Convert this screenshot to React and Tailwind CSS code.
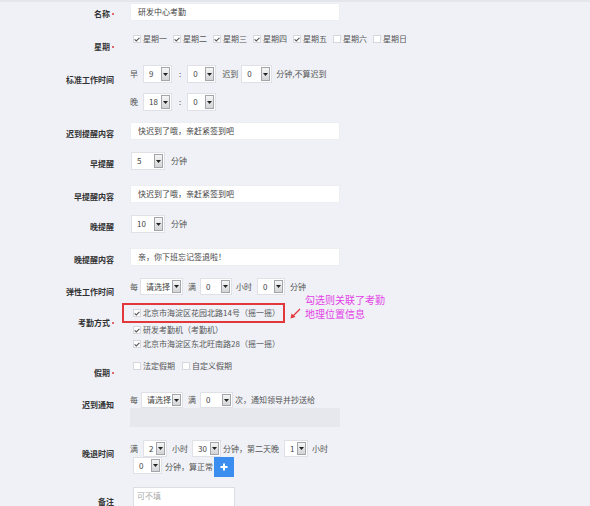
import React from 'react';
import clsx from 'clsx';

const Sel = ({ value, className }) => (
  <div className={clsx('flex items-stretch justify-between bg-white border border-[#dfe1e6] p-px shrink-0', className)}>
    <span className="pl-[4px] self-center text-[#444]">{value}</span>
    <span className="w-[9px] flex items-center justify-center border border-[#a3a5aa] bg-gradient-to-b from-[#f6f6f6] to-[#d3d4d6]">
      <svg width="5" height="3" viewBox="0 0 5 3">
        <path d="M0 0h5L2.5 3z" fill="#222" />
      </svg>
    </span>
  </div>
);

const Check = ({ checked, children }) => (
  <label className="flex items-center gap-[2px]">
    <span className="w-[8px] h-[8px] bg-white border border-[#d6d8dd] flex items-center justify-center shrink-0">
      {checked && (
        <svg width="6" height="5" viewBox="0 0 6 5">
          <path d="M0.6 2.4L2.3 4L5.4 0.9" stroke="#555" strokeWidth="1.1" fill="none" />
        </svg>
      )}
    </span>
    <span>{children}</span>
  </label>
);

const Row = ({ label, required, h, lp, className, children }) => (
  <div className={clsx('flex', h, className)}>
    <div className={clsx('w-[114px] shrink-0 text-right leading-[10px] font-bold text-[#333]', lp)}>
      {label}
      {required && <span className="inline-block w-[2px] h-[2px] rounded-full bg-[#e0393c] ml-[2px] mb-[2px] align-middle" />}
    </div>
    <div className="ml-[16px] flex-1">{children}</div>
  </div>
);

const TextBox = ({ value }) => (
  <div className="w-[210px] h-[18px] bg-white border border-[#eceef2] flex items-center pl-[7px] text-[#444]">{value}</div>
);

export default function App() {
  return (
    <div
      className="w-full h-[506px] overflow-hidden bg-[#eff1f7] border-t-2 border-[#e4e6eb] pt-px text-[8px] text-[#555]"
      style={{ fontFamily: '"Noto Sans CJK SC", "Noto Sans", sans-serif' }}
    >
      <Row label="名称" required h="h-[29px]" lp="pt-[6px]">
        <TextBox value="研发中心考勤" />
      </Row>

      <Row label="星期" required h="h-[33px]" lp="pt-[10px]">
        <div className="h-[14px] flex items-center gap-[6px] pl-[3px]">
          <Check checked>星期一</Check>
          <Check checked>星期二</Check>
          <Check checked>星期三</Check>
          <Check checked>星期四</Check>
          <Check checked>星期五</Check>
          <Check>星期六</Check>
          <Check>星期日</Check>
        </div>
      </Row>

      <Row label="标准工作时间" h="h-[57px]" lp="pt-[10px]">
        <div className="h-[18px] flex items-center">
          <span>早</span>
          <Sel value="9" className="ml-[5px] w-[29px] h-[18px]" />
          <span className="ml-[7px]">:</span>
          <Sel value="0" className="ml-[6px] w-[29px] h-[18px]" />
          <span className="ml-[6px]">迟到</span>
          <Sel value="0" className="ml-[3px] w-[31px] h-[18px]" />
          <span className="ml-[4px]">分钟,不算迟到</span>
        </div>
        <div className="h-[18px] mt-[10px] flex items-center">
          <span>晚</span>
          <Sel value="18" className="ml-[5px] w-[29px] h-[18px]" />
          <span className="ml-[7px]">:</span>
          <Sel value="0" className="ml-[6px] w-[29px] h-[18px]" />
        </div>
      </Row>

      <Row label="迟到提醒内容" h="h-[30px]" lp="pt-[7px]">
        <TextBox value="快迟到了哦，亲赶紧签到吧" />
      </Row>

      <Row label="早提醒" h="h-[33px]" lp="pt-[7px]">
        <div className="h-[18px] flex items-center">
          <Sel value="5" className="ml-[1px] w-[34px] h-[18px]" />
          <span className="ml-[6px]">分钟</span>
        </div>
      </Row>

      <Row label="早提醒内容" h="h-[30px]" lp="pt-[7px]">
        <TextBox value="快迟到了哦，亲赶紧签到吧" />
      </Row>

      <Row label="晚提醒" h="h-[33px]" lp="pt-[7px]">
        <div className="h-[18px] flex items-center">
          <Sel value="10" className="ml-[1px] w-[34px] h-[18px]" />
          <span className="ml-[6px]">分钟</span>
        </div>
      </Row>

      <Row label="晚提醒内容" h="h-[30px]" lp="pt-[7px]">
        <TextBox value="亲，你下班忘记签退啦！" />
      </Row>

      <Row label="弹性工作时间" h="h-[25px]" lp="pt-[9px]">
        <div className="h-[17px] flex items-center">
          <span>每</span>
          <Sel value="请选择" className="ml-[2px] w-[43px] h-[17px]" />
          <span className="ml-[5px]">满</span>
          <Sel value="0" className="ml-[4px] w-[32px] h-[17px]" />
          <span className="ml-[4px]">小时</span>
          <Sel value="0" className="ml-[5px] w-[28px] h-[17px]" />
          <span className="ml-[5px]">分钟</span>
        </div>
      </Row>

      <Row label="考勤方式" required h="h-[56px]" lp="pt-[15px]" className="relative">
        <div className="-ml-[8px] w-[163px] h-[20px] border-2 border-[#e3383b] flex items-center pl-[9px]">
          <Check checked>北京市海淀区花园北路14号（摇一摇）</Check>
        </div>
        <div className="h-[14px] flex items-center pl-[3px]">
          <Check checked>研发考勤机（考勤机）</Check>
        </div>
        <div className="h-[14px] flex items-center pl-[3px]">
          <Check checked>北京市海淀区东北旺南路28（摇一摇）</Check>
        </div>
        <svg className="absolute left-[289px] top-[5px]" width="12" height="11" viewBox="0 0 12 11">
          <path d="M11 1L3 9" stroke="#e3383b" strokeWidth="1.3" />
          <path d="M1.5 10.5L2.5 5.5L6.5 9z" fill="#e3383b" />
        </svg>
        <div className="absolute left-[305px] -top-[10px] text-[10px] leading-[14px] text-[#e33fe6]">
          <div>勾选则关联了考勤</div>
          <div>地理位置信息</div>
        </div>
      </Row>

      <Row label="假期" required h="h-[33px]" lp="pt-[9px]">
        <div className="h-[14px] flex items-center gap-[7px] pl-[3px]">
          <Check>法定假期</Check>
          <Check>自定义假期</Check>
        </div>
      </Row>

      <Row label="迟到通知" h="h-[48px]" lp="pt-[8px]">
        <div className="h-[16px] flex items-center">
          <span>每</span>
          <Sel value="请选择" className="ml-[3px] w-[42px] h-[16px]" />
          <span className="ml-[5px]">满</span>
          <Sel value="0" className="ml-[4px] w-[33px] h-[16px]" />
          <span className="ml-[2px]">次，通知领导并抄送给</span>
        </div>
        <div className="w-[210px] h-[19px] bg-[#e7e8ed]" />
      </Row>

      <Row label="晚退时间" h="h-[47px]" lp="pt-[9px]">
        <div className="h-[17px] flex items-center">
          <span>满</span>
          <Sel value="2" className="ml-[5px] w-[24px] h-[17px]" />
          <span className="ml-[5px]">小时</span>
          <Sel value="30" className="ml-[4px] w-[29px] h-[17px]" />
          <span className="ml-[2px]">分钟，第二天晚</span>
          <Sel value="1" className="ml-[5px] w-[24px] h-[17px]" />
          <span className="ml-[4px]">小时</span>
        </div>
        <div className="h-[20px] flex items-center pl-[3px]">
          <Sel value="0" className="w-[29px] h-[17px] self-start" />
          <span className="ml-[3px]">分钟，算正常</span>
          <button className="ml-[1px] w-[20px] h-[20px] bg-[#3b8ef0] flex items-center justify-center">
            <svg width="8" height="8" viewBox="0 0 8 8">
              <path d="M4 0.5v7M0.5 4h7" stroke="#fff" strokeWidth="2" />
            </svg>
          </button>
        </div>
      </Row>

      <Row label="备注" h="h-[40px]" lp="pt-[10px]">
        <div className="ml-[3px] w-[102px] h-[36px] bg-white border border-[#dcdee3] pl-[3px] pt-[2px] text-[#aaa]">可不填</div>
      </Row>
    </div>
  );
}
